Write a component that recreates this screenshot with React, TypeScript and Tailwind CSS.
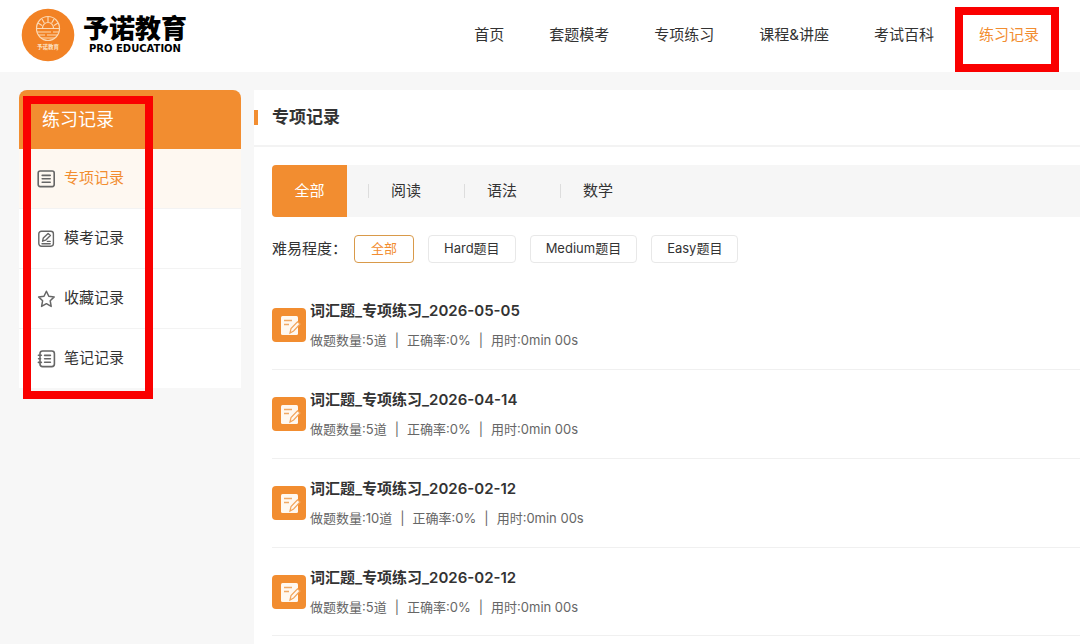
import React from "react";

const navItems = ["首页", "套题模考", "专项练习", "课程&讲座", "考试百科", "练习记录"];

const subjects = ["阅读", "语法", "数学"];

const levels = ["全部", "Hard题目", "Medium题目", "Easy题目"];

const records = [
  { title: "词汇题_专项练习_2026-05-05", count: 5 },
  { title: "词汇题_专项练习_2026-04-14", count: 5 },
  { title: "词汇题_专项练习_2026-02-12", count: 10 },
  { title: "词汇题_专项练习_2026-02-12", count: 5 },
];

const iconProps = {
  className: "size-5 shrink-0 text-[#666]",
  viewBox: "0 0 20 20",
  fill: "none",
  stroke: "currentColor",
  strokeWidth: 1.6,
  strokeLinecap: "round" as const,
  strokeLinejoin: "round" as const,
  "aria-hidden": true,
};

const ListIcon = () => (
  <svg {...iconProps}>
    <rect x="2.2" y="2" width="16" height="15.6" rx="2" />
    <path d="M6.2 6.4h8M6.2 9.8h8M6.2 13.2h8" />
  </svg>
);

const EditIcon = () => (
  <svg {...iconProps} strokeWidth={1.4}>
    <rect x="2.8" y="2.2" width="14.6" height="15" rx="2.6" />
    <path d="M6.6 12.2l.7-3.2 4.8-4.6 2.3 2.2-4.8 4.6zM6 14.8h8.200M11.400 12.400h2.800" />
  </svg>
);

const StarIcon = () => (
  <svg {...iconProps} strokeWidth={1.5}>
    <path d="M10.400 2.200l2.400 5 5.400.7-4 3.900 1 5.600-4.800-2.700-4.800 2.700 1-5.600-4-3.900 5.400-.7z" />
  </svg>
);

const NoteIcon = () => (
  <svg {...iconProps}>
    <rect x="4" y="2" width="14.400" height="15.600" rx="2.600" />
    <path d="M2.400 6.200h3M2.400 13.400h3M2.600 9.800h2M8.600 6.400h5.800M8.600 9.800h5.800M8.600 13.200h5.800" />
  </svg>
);

const RecordIcon = () => (
  <svg className="size-[34px] shrink-0" viewBox="0 0 34 34" aria-hidden="true">
    <rect width="34" height="34" rx="4" fill="#f28d30" />
    <rect x="9" y="8" width="17" height="19" rx="1.5" fill="#fff8f0" />
    <path d="M12 12.5h8M12 16.5h5" stroke="#f0a964" strokeWidth="1.3" />
    <path d="M18 25l1-4.500 6.500-6.700 2.600 2.200-6.500 7z" fill="#fff8f0" stroke="#f2a45a" strokeWidth="1.2" />
  </svg>
);

const sideItems = [
  { label: "专项记录", Icon: ListIcon },
  { label: "模考记录", Icon: EditIcon },
  { label: "收藏记录", Icon: StarIcon },
  { label: "笔记记录", Icon: NoteIcon },
];

const Logo = () => (
  <a href="#" className="flex items-center gap-2">
    <svg className="size-[54px]" viewBox="0 0 54 54" aria-hidden="true">
      <circle cx="27" cy="27" r="26.3" fill="#f28225" />
      <g fill="none" stroke="#fbd9b4" strokeWidth="1.2">
        <ellipse cx="27" cy="20.5" rx="11.5" ry="12" />
        <path d="M21.5 20a5.500 5.500 0 0 1 11 0M15.500 20.500h23M16 24h14M32 24h6M17 27h7M26 27h11M20 30h14" />
        <path d="M27 9v5M21 11l2.300 4M33 11l-2.300 4M17 15l4 2.500M37 15l-4 2.500" />
      </g>
      <text x="27" y="41" textAnchor="middle" fontSize="5.500" fontWeight="700" fill="#fde3c6">
        予诺教育
      </text>
    </svg>
    <span className="flex flex-col items-center text-black">
      <span className="text-[26px] leading-7 font-black">予诺教育</span>
      <span className="font-['DejaVu_Sans',sans-serif] text-[10px] leading-3 font-bold">PRO EDUCATION</span>
    </span>
  </a>
);

const App: React.FC = () => {
  return (
    <div className="flex min-h-screen flex-col bg-[#f7f7f7] font-['Inter','Noto_Sans_CJK_SC',sans-serif] text-[#333]">
      <header className="flex h-[72px] items-center justify-between bg-white pr-[41px] pb-[3px] pl-[21px]">
        <Logo />
        <nav className="flex gap-[45px] text-[15px] leading-6">
          {navItems.map((item) =>
            item === "练习记录" ? (
              <a key={item} href="#" className="relative text-[#f28d30]">
                {item}
                <span className="absolute -top-4 -right-5 -bottom-[25px] -left-6 border-8 border-[#fa0000]" />
              </a>
            ) : (
              <a key={item} href="#">{item}</a>
            )
          )}
        </nav>
      </header>

      <div className="flex flex-1 gap-[13px] pt-[18px] pl-[19px]">
        <aside className="relative w-[222px] shrink-0 self-start">
          <h2 className="h-[59px] rounded-t-lg bg-[#f28d30] pl-[23px] text-[18px] leading-[59px] text-white">
            练习记录
          </h2>
          <ul className="bg-white">
            {sideItems.map(({ label, Icon }, i) => (
              <li key={label} className="border-b border-[#f3f3f3] last:border-0">
                <a
                  href="#"
                  className={
                    i === 0
                      ? "flex h-[59px] items-center gap-2 bg-[#fef8f1] pl-[17px] text-[15px] text-[#f28d30]"
                      : "flex h-[59px] items-center gap-2 pl-[17px] text-[15px]"
                  }
                >
                  <Icon />
                  {label}
                </a>
              </li>
            ))}
          </ul>
          {/* highlight frame over the menu */}
          <div className="pointer-events-none absolute top-[6px] -bottom-[11px] left-1 w-[130px] border-8 border-[#fa0000]" />
        </aside>

        <main className="min-w-0 flex-1 bg-white">
          <div className="flex h-[57px] items-center gap-[14px] border-b-2 border-[#f3f3f3]">
            <span className="h-[15px] w-1 bg-[#f28d30]" />
            <h1 className="text-[17px] font-bold">专项记录</h1>
          </div>

          <div className="pt-[18px] pl-[18px]">
            <div className="flex h-[52px] items-center rounded-l bg-[#f6f6f6] text-[15px]">
              <button className="h-full w-[75px] rounded-l bg-[#f28d30] text-white">全部</button>
              {subjects.map((subject) => (
                <div key={subject} className="flex w-24 items-center pl-[21px]">
                  <span className="h-[14px] w-px bg-[#ddd]" />
                  <button className="pl-[22px]">{subject}</button>
                </div>
              ))}
            </div>

            <div className="flex items-center pt-[18px]">
              <span className="w-[82px] text-[15px]">难易程度：</span>
              <div className="flex gap-[14px] text-[13px]">
                {levels.map((level, i) => (
                  <button
                    key={level}
                    className={
                      i === 0
                        ? "h-7 rounded border border-[#d99a4a] px-4 text-[#f28d30]"
                        : "h-7 rounded border border-[#e8e8e8] px-[15px]"
                    }
                  >
                    {level}
                  </button>
                ))}
              </div>
            </div>

            <ul className="pt-[18px]">
              {records.map((record, i) => (
                <li key={i} className="flex h-[89px] items-center gap-1 border-b border-[#f0f0f0] last:h-[88px]">
                  <RecordIcon />
                  <div>
                    <h3 className="text-[15px] leading-6 font-semibold">{record.title}</h3>
                    <p className="mt-2 pb-0.5 text-[13px] leading-[18px] text-[#666]">
                      做题数量:{record.count}道<span className="mx-2">|</span>正确率:0%
                      <span className="mx-2">|</span>用时:0min 00s
                    </p>
                  </div>
                </li>
              ))}
            </ul>
          </div>
        </main>
      </div>
    </div>
  );
};

export default App;
